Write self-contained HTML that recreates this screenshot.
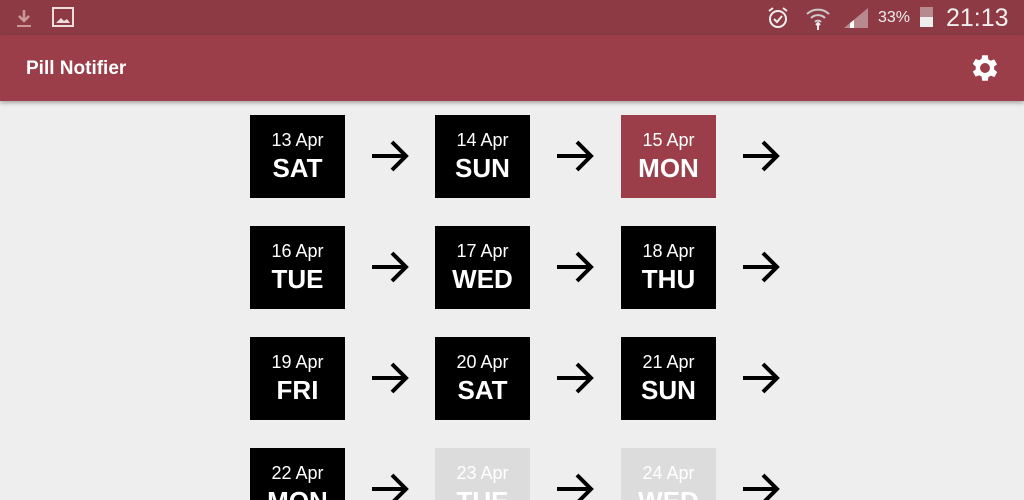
<!DOCTYPE html>
<html><head><style>
html,body{margin:0;width:1024px;height:500px;overflow:hidden}
body{background:#eeeeee;font-family:"Liberation Sans",sans-serif;position:relative}
.sb{position:absolute;left:0;top:0;width:1024px;height:35px;background:#8d3a44}
.ab{position:absolute;left:0;top:35px;width:1024px;height:66px;background:#9b3e49;box-shadow:0 2px 4px rgba(0,0,0,.3)}
.t{position:absolute;left:26px;top:58px;color:#fff;font-size:19px;font-weight:bold}
.b{position:absolute;width:95px;height:83px;background:#000;color:#fff;text-align:center}
.b .d{position:absolute;top:15px;width:100%;font-size:18px}
.b .w{position:absolute;top:38px;width:100%;font-size:26px;font-weight:bold}
.red{background:#9b3e49}.g{background:#dcdcdc}
.ar{position:absolute;width:38px;height:32px}
</style></head><body>
<div class="sb">
<svg style="position:absolute;left:14px;top:8px" width="20" height="20"><path d="M10 2v10M5 8l5 5 5-5" stroke="#c99" stroke-width="2.5" fill="none"/><path d="M3 18h14" stroke="#c99" stroke-width="2"/></svg>
<svg style="position:absolute;left:52px;top:7px" width="22" height="20"><rect x="1" y="1" width="20" height="18" fill="none" stroke="#ecdcdc" stroke-width="2"/><path d="M4 16l5-5 3 3 3-2 3 4z" fill="#ecdcdc"/></svg>
<svg style="position:absolute;left:766px;top:6px" width="24" height="24"><circle cx="12" cy="13" r="8" fill="none" stroke="#eee" stroke-width="2"/><path d="M8 13l3 3 5-6" stroke="#eee" stroke-width="2" fill="none"/><path d="M3 5l4-3M21 5l-4-3" stroke="#eee" stroke-width="2"/></svg>
<svg style="position:absolute;left:805px;top:5px" width="26" height="26"><path d="M2 9a16 16 0 0 1 22 0M6 13a10 10 0 0 1 14 0M10 17a4 4 0 0 1 6 0" stroke="#ccc" stroke-width="2" fill="none"/><path d="M13 18v7M11 20l2-2 2 2" stroke="#eee" stroke-width="2" fill="none"/></svg>
<svg style="position:absolute;left:842px;top:7px" width="28" height="22"><path d="M2 21L26 1v20z" fill="#b78a90"/><path d="M8 21v-5l4-3v8z" fill="#fff"/></svg>
<div style="position:absolute;left:878px;top:9px;color:#eee;font-size:16px">33%</div>
<div style="position:absolute;left:920px;top:7px;width:13px;height:20px;background:#b78a90"></div>
<div style="position:absolute;left:920px;top:17px;width:13px;height:10px;background:#eee"></div>
<div style="position:absolute;left:946px;top:4px;color:#eee;font-size:25px">21:13</div>
</div>
<div class="ab"></div>
<div class="t">Pill Notifier</div>
<svg style="position:absolute;left:968px;top:51px" width="34" height="34" viewBox="0 0 24 24"><path fill="#fff" d="M19.4 13a7.5 7.5 0 0 0 0-2l2.1-1.6-2-3.5-2.5 1a7 7 0 0 0-1.7-1L15 3h-4l-.4 2.6a7 7 0 0 0-1.7 1l-2.5-1-2 3.5L6.5 11a7.5 7.5 0 0 0 0 2l-2.1 1.6 2 3.5 2.5-1a7 7 0 0 0 1.7 1L11 21h4l.4-2.6a7 7 0 0 0 1.7-1l2.5 1 2-3.5zM13 15.5a3.5 3.5 0 1 1 0-7 3.5 3.5 0 0 1 0 7z" transform="translate(-1 0)"/></svg>

<div id="g"></div>
<script>
var rows=[["13 Apr","SAT",""],["14 Apr","SUN",""],["15 Apr","MON","red"],["16 Apr","TUE",""],["17 Apr","WED",""],["18 Apr","THU",""],["19 Apr","FRI",""],["20 Apr","SAT",""],["21 Apr","SUN",""],["22 Apr","MON",""],["23 Apr","TUE","g"],["24 Apr","WED","g"]];
var h="";
for(var i=0;i<12;i++){var r=Math.floor(i/3),c=i%3;var x=[250,435,621][c],y=115+r*111;
h+='<div class="b '+rows[i][2]+'" style="left:'+x+'px;top:'+y+'px"><div class="d">'+rows[i][0]+'</div><div class="w">'+rows[i][1]+'</div></div>';
h+='<svg class="ar" style="left:'+(x+121)+'px;top:'+(y+25)+'px" viewBox="0 0 38 32"><path d="M1 16h34M21 2l14 14-14 14" stroke="#000" stroke-width="4" fill="none"/></svg>';}
document.getElementById("g").innerHTML=h;
</script>
</body></html>
